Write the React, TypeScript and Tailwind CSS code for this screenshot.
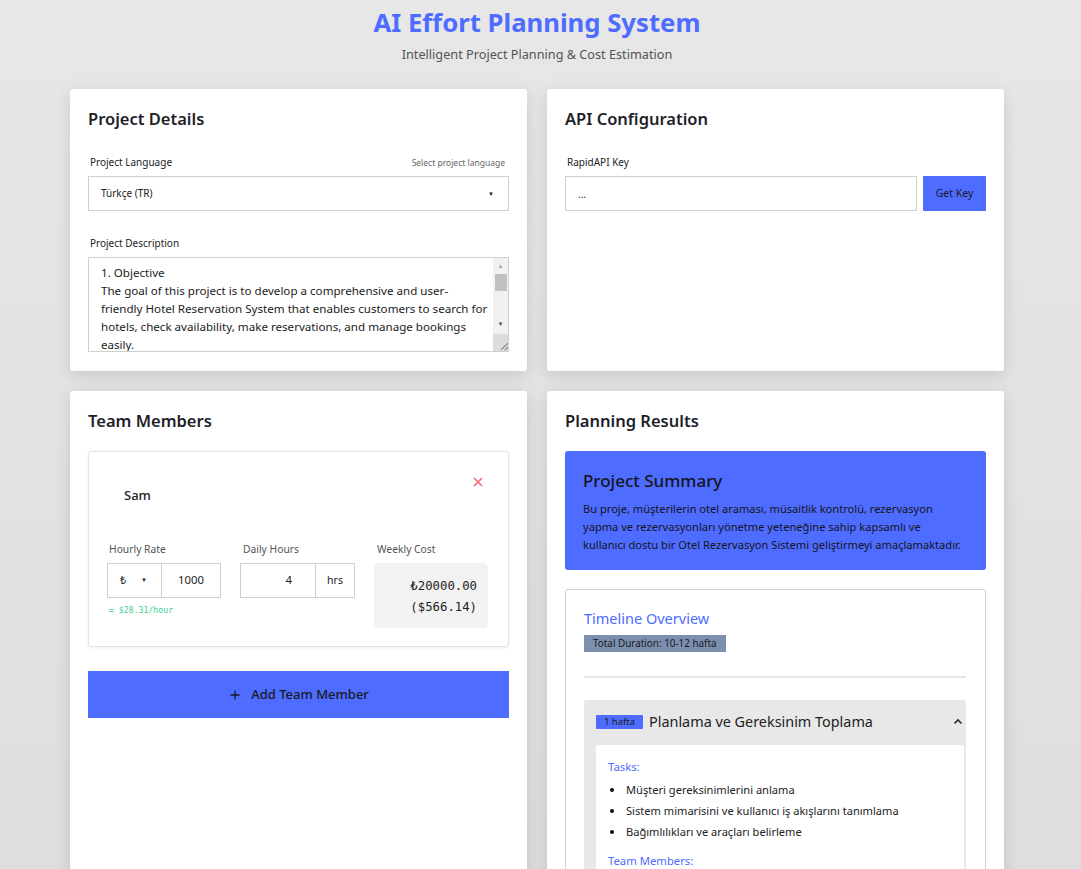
import React, { useState } from 'react';
import { Plus } from 'lucide-react';

// wrapped the way the original textarea shows it
const description = [
  '1. Objective',
  'The goal of this project is to develop a comprehensive and user-',
  'friendly Hotel Reservation System that enables customers to search for',
  'hotels, check availability, make reservations, and manage bookings',
  'easily.',
  '',
  '2. Scope',
  'The system will include a customer-facing web application, an admin',
  'panel for hotel staff, and a REST API.',
].join('\n');

const tasks = [
  'Müşteri gereksinimlerini anlama',
  'Sistem mimarisini ve kullanıcı iş akışlarını tanımlama',
  'Bağımlılıkları ve araçları belirleme',
];

const cardCls = 'bg-white rounded-[3px] shadow-[0_4px_16px_rgba(0,0,0,0.13)] px-[18px] pt-[19px]';
const titleCls = 'text-[16.5px] font-semibold text-[#1e1e2a] leading-[22px]';
const labelCls = 'text-[10px] leading-[14px] text-[#222]';

export default function App() {
  const [lang, setLang] = useState('tr');
  const [hours, setHours] = useState('4');
  const [rate, setRate] = useState('1000');

  return (
    <div
      className="min-h-screen bg-[linear-gradient(180deg,#e7e7e7,#dddddd)] pr-[7px] pb-10"
      style={{ fontFamily: '"Noto Sans", "Open Sans", sans-serif' }}
    >
      <header className="text-center pt-[7px] pb-[26px]">
        <h1 className="text-[25.7px] font-bold text-[#4e6cff] leading-[32px]">AI Effort Planning System</h1>
        <p className="text-[12.7px] leading-[18px] text-[#555] mt-[6px]">Intelligent Project Planning &amp; Cost Estimation</p>
      </header>

      <div className="w-[934px] mx-auto grid grid-cols-2 gap-x-[20px] gap-y-[20px] items-start">
        {/* Project details */}
        <div className={`${cardCls} pb-[19px]`}>
          <h2 className={titleCls}>Project Details</h2>
          <div className="flex justify-between items-end mt-[25px] mb-[7px] px-[2px]">
            <label className={labelCls}>Project Language</label>
            <span className="text-[8.5px] leading-[12px] text-[#666] pr-[2px]">Select project language</span>
          </div>
          <div className="relative">
            <select
              value={lang}
              onChange={(e) => setLang(e.target.value)}
              className="appearance-none block w-full h-[35px] border border-[#cfcfcf] bg-white pl-[12px] text-[10px] text-[#222] outline-none"
            >
              <option value="tr">Türkçe (TR)</option>
              <option value="en">English (EN)</option>
            </select>
            <span className="absolute right-[15px] top-[14px] text-[6px] text-[#222] pointer-events-none">▼</span>
          </div>
          <label className={`block ${labelCls} mt-[25px] mb-[7px] px-[2px]`}>Project Description</label>
          <div className="relative">
            <textarea
              defaultValue={description}
              className="block w-full h-[95px] border border-[#cfcfcf] pl-[12px] pr-[17px] pt-[6px] text-[11.6px] leading-[18px] text-[#222] outline-none resize-none overflow-hidden whitespace-pre"
            />
            {/* scrollbar */}
            <div className="absolute right-[1px] top-[1px] bottom-[1px] w-[15px] bg-[#f1f1f1] flex flex-col items-center pointer-events-none">
              <span className="mt-[5px] text-[6px] leading-[6px] text-[#a3a3a3]">▲</span>
              <div className="mt-[5px] w-[12px] h-[17px] bg-[#c1c1c1]" />
              <div className="flex-1" />
              <span className="mb-[7px] text-[6px] leading-[6px] text-[#505050]">▼</span>
              <div className="w-[15px] h-[17px] bg-[#dcdcdc] relative overflow-hidden">
                <div className="absolute right-[-1px] bottom-[4px] w-[9px] h-px bg-[#777] rotate-[-45deg]" />
                <div className="absolute right-[-1px] bottom-[2px] w-[5px] h-px bg-[#777] rotate-[-45deg]" />
              </div>
            </div>
          </div>
        </div>

        {/* API config */}
        <div className={`${cardCls} self-stretch`}>
          <h2 className={titleCls}>API Configuration</h2>
          <label className={`block ${labelCls} mt-[25px] mb-[7px] px-[2px]`}>RapidAPI Key</label>
          <div className="flex gap-[6px]">
            <input
              type="text"
              defaultValue="..."
              className="flex-1 h-[35px] border border-[#cfcfcf] px-[12px] text-[10px] text-[#333] outline-none"
            />
            <button className="w-[63px] h-[35px] bg-[#4e6cff] text-[10.5px] text-[#1a1a24] rounded-[1px]">Get Key</button>
          </div>
        </div>

        {/* Team members */}
        <div className={`${cardCls} self-stretch min-h-[500px]`}>
          <h2 className={titleCls}>Team Members</h2>
          <div className="mt-[19px] border border-[#e4e4e4] rounded-[3px] shadow-[0_1px_3px_rgba(0,0,0,0.07)] pl-[18px] pr-[19px] pt-[22px] pb-[18px]">
            <div className="flex justify-between items-start">
              <span className="text-[13px] leading-[18px] font-medium text-[#222] ml-[17px] mt-[12px]">Sam</span>
              <svg width="14" height="14" viewBox="0 0 14 14" className="mr-[4px] mt-[1px]" fill="none" stroke="#f5626f" strokeWidth="1.5">
                <path d="M3 3l8 8M11 3l-8 8" />
              </svg>
            </div>
            <div className="flex gap-[19px] mt-[38px]">
              <div className="w-[114px]">
                <div className="text-[10.3px] leading-[14px] text-[#555] mb-[7px] ml-[2px]">Hourly Rate</div>
                <div className="flex h-[35px]">
                  <div className="w-[55px] border border-[#cfcfcf] flex items-center justify-between pl-[12px] pr-[14px] text-[11px] text-[#222]">
                    <span>₺</span>
                    <span className="text-[6px]">▼</span>
                  </div>
                  <input
                    value={rate}
                    onChange={(e) => setRate(e.target.value)}
                    className="w-[59px] border border-l-0 border-[#cfcfcf] text-center text-[11.3px] text-[#222] outline-none"
                  />
                </div>
                <div className="font-['DejaVu_Sans_Mono',monospace] text-[8.2px] leading-[12px] text-[#45cf90] mt-[6px] ml-[2px]">= $28.31/hour</div>
              </div>
              <div className="w-[115px]">
                <div className="text-[10.3px] leading-[14px] text-[#555] mb-[7px] ml-[3px]">Daily Hours</div>
                <div className="flex h-[35px]">
                  <input
                    value={hours}
                    onChange={(e) => setHours(e.target.value)}
                    className="w-[76px] border border-[#cfcfcf] text-right pr-[23px] text-[11.3px] text-[#222] outline-none"
                  />
                  <div className="flex-1 border border-l-0 border-[#cfcfcf] flex items-center justify-center text-[10.5px] text-[#222]">hrs</div>
                </div>
              </div>
              <div className="w-[114px]">
                <div className="text-[10.3px] leading-[14px] text-[#555] mb-[7px] ml-[3px]">Weekly Cost</div>
                <div className="h-[65px] bg-[#f2f2f2] rounded-[5px] flex flex-col justify-center items-end pr-[11px] pt-[3px] font-['DejaVu_Sans_Mono',monospace] text-[12.3px] leading-[21px] text-[#222]">
                  <span>₺20000.00</span>
                  <span>($566.14)</span>
                </div>
              </div>
            </div>
          </div>
          <button className="mt-[24px] w-full h-[47px] bg-[#4e6cff] flex items-center justify-center gap-[9px] text-[13px] font-medium text-[#1a1a24]">
            <Plus className="w-[14px] h-[14px]" strokeWidth={2.2} />
            Add Team Member
          </button>
        </div>

        {/* Planning results */}
        <div className={`${cardCls} pb-[18px]`}>
          <h2 className={titleCls}>Planning Results</h2>
          <div className="mt-[19px] bg-[#4e6cff] rounded-[3px] px-[18px] pt-[19px] pb-[16px]">
            <h3 className="text-[17px] font-medium text-[#151520] leading-[22px] mb-[8px]">Project Summary</h3>
            <p className="text-[11.1px] leading-[18px] text-[#151520]">
              Bu proje, müşterilerin otel araması, müsaitlik kontrolü, rezervasyon
              <br />
              yapma ve rezervasyonları yönetme yeteneğine sahip kapsamlı ve
              <br />
              kullanıcı dostu bir Otel Rezervasyon Sistemi geliştirmeyi amaçlamaktadır.
            </p>
          </div>
          <div className="mt-[19px] border border-[#d0d0d0] rounded-[3px] pl-[18px] pr-[19px] pt-[18px] pb-[20px]">
            <h3 className="text-[14.5px] text-[#4e6cff] leading-[20px]">Timeline Overview</h3>
            <span className="inline-block align-top mt-[7px] bg-[#7b8fae] text-[9.9px] text-[#1a1a24] px-[9px] h-[17px] leading-[17px]">Total Duration: 10-12 hafta</span>
            <hr className="mt-[24px] border-0 h-[2px] bg-[#e6e6e6]" />
            <div className="mt-[22px] bg-[#e8e8e8] rounded-[3px] pl-[12px] pr-[2px] pt-[11px]">
              <div className="flex items-center justify-between h-[22px]">
                <div className="flex items-center gap-[6px]">
                  <span className="w-[47px] text-center bg-[#4e6cff] text-[9.5px] text-[#1a1a24] h-[14px] leading-[14px] rounded-[1px]">1 hafta</span>
                  <span className="text-[14.4px] leading-[22px] text-[#222]">Planlama ve Gereksinim Toplama</span>
                </div>
                <svg width="12" height="12" viewBox="0 0 12 12" fill="none" stroke="#2a2a3a" strokeWidth="1.6">
                  <path d="M2.5 7.5L6 4l3.5 3.5" />
                </svg>
              </div>
              <div className="mt-[12px] bg-white rounded-[3px] pl-[12px] pr-[12px] pt-[13px] pb-[10px]">
                <div className="text-[11.3px] leading-[18px] text-[#4e6cff] mb-[3px]">Tasks:</div>
                <ul className="list-disc pl-[17px] text-[11.1px] leading-[21px] text-[#222] marker:text-[#111]">
                  {tasks.map((t) => (
                    <li key={t} className="pl-[1px]">{t}</li>
                  ))}
                </ul>
                <div className="text-[11.3px] leading-[18px] text-[#4e6cff] mt-[10px]">Team Members:</div>
                <ul className="list-disc pl-[17px] text-[11.1px] leading-[21px] text-[#222]">
                  <li className="pl-[1px]">Sam</li>
                </ul>
              </div>
            </div>
          </div>
        </div>
      </div>
    </div>
  );
}
